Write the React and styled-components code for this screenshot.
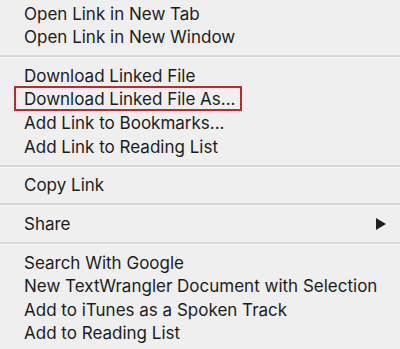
import React from 'react';
import styled, { createGlobalStyle } from 'styled-components';

const GlobalStyle = createGlobalStyle`
  html, body {
    margin: 0;
    padding: 0;
    background: #efefef;
  }
  body {
    font-family: Inter, "Liberation Sans", sans-serif;
  }
`;

const groups = [
  [{ label: 'Open Link in New Tab' }, { label: 'Open Link in New Window' }],
  [
    { label: 'Download Linked File' },
    { label: 'Download Linked File As...', highlighted: true },
    { label: 'Add Link to Bookmarks...' },
    { label: 'Add Link to Reading List' },
  ],
  [{ label: 'Copy Link' }],
  [{ label: 'Share', submenu: true }],
  [
    { label: 'Search With Google' },
    { label: 'New TextWrangler Document with Selection' },
    { label: 'Add to iTunes as a Spoken Track' },
    { label: 'Add to Reading List' },
  ],
];

const App = () => {
  return (
    <>
      <GlobalStyle />
      <Menu>
        {groups.map((group, gi) => (
          <React.Fragment key={gi}>
            {gi > 0 && <Separator />}
            {group.map(item => (
              <Item key={item.label}>
                <Label $highlighted={item.highlighted}>{item.label}</Label>
                {item.submenu && <Arrow />}
              </Item>
            ))}
          </React.Fragment>
        ))}
      </Menu>
    </>
  );
};

export default App;

const Menu = styled.div`
  width: 400px;
  height: 349px;
  box-sizing: border-box;
  padding-top: 2px;
  background: #efefef;
  display: flex;
  flex-direction: column;
  overflow: hidden;
`;
const Item = styled.div`
  height: 23.6px;
  flex: none;
  display: flex;
  align-items: center;
  justify-content: space-between;
  padding: 0 14px 0 24px;
  font-size: 17px;
  color: #1c1c1c;
  white-space: nowrap;
`;
const Label = styled.span`
  display: inline-flex;
  align-items: center;
  height: 100%;
  box-sizing: border-box;
  ${props => props.$highlighted && `
    height: 25px;
    margin: -2px 0 0 -10px;
    padding: 0 4px 0 8px;
    border: 2px solid #c3262c;
  `}
`;
const Arrow = styled.span`
  width: 0;
  height: 0;
  border-top: 6px solid transparent;
  border-bottom: 6px solid transparent;
  border-left: 10px solid #222;
`;
const Separator = styled.div`
  flex: none;
  height: 15px;
  display: flex;
  align-items: center;

  &::before {
    content: '';
    display: block;
    width: 100%;
    height: 2px;
    background: #d8d8d8;
    border-bottom: 1px solid #f8f8f8;
  }
`;
